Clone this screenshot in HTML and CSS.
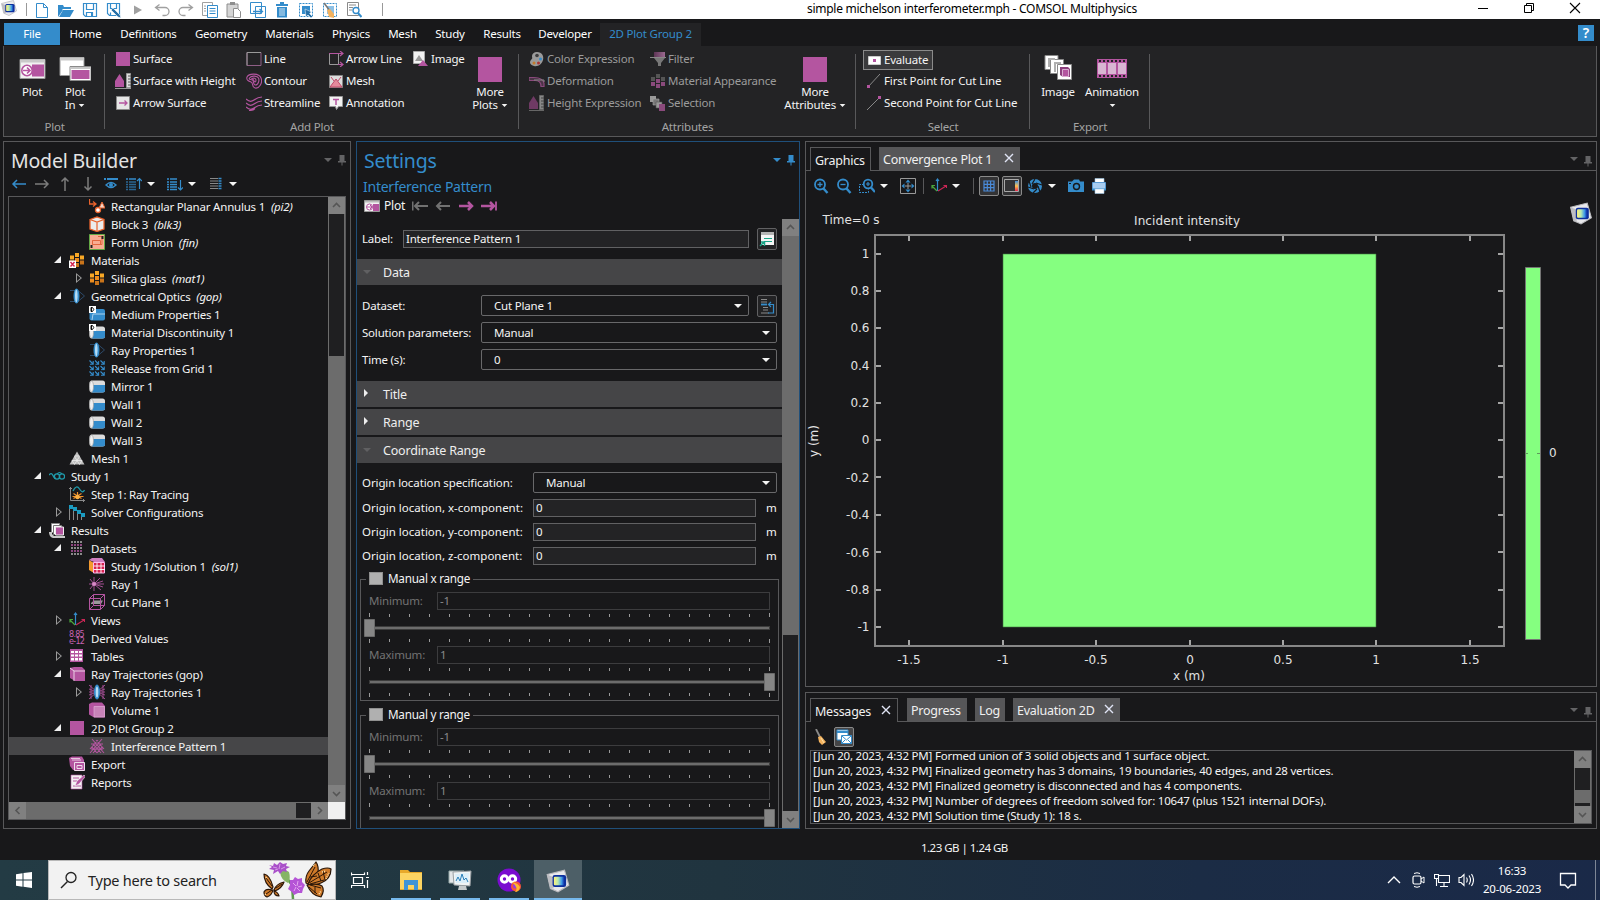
FILE: index.html
```html
<!DOCTYPE html>
<html lang="en">
<head>
<meta charset="utf-8">
<title>simple michelson interferometer.mph - COMSOL Multiphysics</title>
<link rel="stylesheet" href="styles.css">
</head>
<body>
<svg class="defs" aria-hidden="true">
<defs>
<linearGradient id="gLogo" x1="0" x2="1"><stop offset="0" stop-color="#fff27a"/><stop offset=".4" stop-color="#b8e8b0"/><stop offset=".75" stop-color="#3f9be8"/><stop offset="1" stop-color="#1030a8"/></linearGradient>
<linearGradient id="gBar" x1="0" x2="0" y1="0" y2="1"><stop offset="0" stop-color="#3a8fe0"/><stop offset=".5" stop-color="#ffc04a"/><stop offset="1" stop-color="#e02a50"/></linearGradient>
<linearGradient id="gFil" x1="0" x2="1"><stop offset="0" stop-color="#5d3455"/><stop offset="1" stop-color="#9a6a90"/></linearGradient>
</defs>
<symbol id="logo" viewBox="0 0 24 24"><path d="M2 6 18 2 22 16 12 22 5 19z" fill="#e9e9ec" stroke="#b9b9bd"/><path d="M2 6 7 8 8 19 5 19z" fill="#bdbdc2"/><rect x="7" y="6.500" width="12.500" height="11" rx="2" fill="#0d2f9d"/><rect x="8.200" y="8" width="9.500" height="8" rx="1" fill="url(#gLogo)"/></symbol>
<symbol id="new" viewBox="0 0 16 16"><path d="M2.500 1.500h7l4 4v10h-11zM9.500 1.500v4h4" fill="#fff" stroke="#348ccb"/></symbol>
<symbol id="open" viewBox="0 0 16 16"><path d="M0 15V3h5l1 2h7v3H5z" fill="#348ccb"/><path d="M5 8h11l-4 7H1z" fill="#348ccb"/><path d="M4.500 7.500h9" stroke="#fff"/></symbol>
<symbol id="save" viewBox="0 0 16 16"><path d="M1.500 1.500h13v13h-11l-2-2zM4.500 1.500v6h7v-6M4.500 14.500v-4h6v4" fill="none" stroke="#348ccb" stroke-width="1.200"/><path d="M9 11h1.500v3H9z" fill="#348ccb"/></symbol>
<symbol id="saveas" viewBox="0 0 16 16"><path d="M1.500 1.500h12v12h-10l-2-2zM4.500 1.500v5h6v-5M4.500 13.500v-3" fill="none" stroke="#348ccb" stroke-width="1.200"/><path d="M7 6l7 7 1 3-3-1-7-7z" fill="#2670a8" stroke="#fff" stroke-width=".6"/></symbol>
<symbol id="play" viewBox="0 0 16 16"><path d="M4 3.500l8 4.500-8 4.500z" fill="#a0a0a0"/></symbol>
<symbol id="undo" viewBox="0 0 16 16"><path d="M5.500 2.500l-4 3 4 3M1.500 5.500H11a3.500 3.500 0 0 1 0 8H8.500" fill="none" stroke="#a0a0a0" stroke-width="1.300"/></symbol>
<symbol id="redo" viewBox="0 0 16 16"><path d="M10.500 2.500l4 3-4 3M14.500 5.500H5a3.500 3.500 0 0 0 0 8h2.500" fill="none" stroke="#a0a0a0" stroke-width="1.300"/></symbol>
<symbol id="copy" viewBox="0 0 16 16"><path d="M.5.500h10v13H.5z" fill="#fff" stroke="#a0a0a0"/><path d="M2 4h2M2 6.500h2M2 9h2" stroke="#a0a0a0"/><path d="M5.500 3.500h10v12h-10z" fill="#fff" stroke="#348ccb"/><path d="M7.500 6.500h6M7.500 9h6M7.500 11.500h6" stroke="#348ccb"/></symbol>
<symbol id="paste" viewBox="0 0 16 16"><path d="M1 2h11v13H1z" fill="#d5d5d5" stroke="#8e8e8e"/><path d="M4 0h5v3H4z" fill="#8e8e8e"/><path d="M7.500 6.500h4l3 3v6h-7z" fill="#fff" stroke="#8e8e8e"/></symbol>
<symbol id="dup" viewBox="0 0 16 16"><path d="M.5.500h11v11H.500zM5.500 4.500h10v11h-10z" fill="#fff" stroke="#348ccb"/><path d="M3 9.500h9M9.500 7l3 2.500-3 2.500" fill="none" stroke="#348ccb" stroke-width="1.300"/></symbol>
<symbol id="trash" viewBox="0 0 16 16"><path d="M2 2h12v2H2zM6 0h4v2H6zM3 5h10v10.500H3z" fill="#348ccb"/><path d="M6 6v8M8 6v8M10 6v8" stroke="#fff" stroke-width=".8"/></symbol>
<symbol id="selbox" viewBox="0 0 16 16"><path d="M1.500 1.500h13v13h-13z" fill="none" stroke="#348ccb" stroke-dasharray="2 1"/><path d="M4 4h8v8H4z" fill="#348ccb"/><path d="M7 7l1 8 2-2 3 3 1.500-1.500-3-3 2-1.500z" fill="#2670a8" stroke="#fff" stroke-width=".5"/></symbol>
<symbol id="selclear" viewBox="0 0 16 16"><path d="M1.500 1.500h13v13h-13z" fill="none" stroke="#348ccb" stroke-dasharray="2 1"/><path d="M5 4h7v8H5z" fill="#8cc0e6"/><path d="M2 1l6 8" stroke="#777" stroke-width="1.500"/><path d="M5 8l3-1 4 5v4l-5-1z" fill="#f3b25e"/></symbol>
<symbol id="find" viewBox="0 0 16 16"><path d="M1.500.500h11v13h-11z" fill="#fff" stroke="#8a8a8a"/><path d="M3 3h7M3 5.500h4M3 8h3" stroke="#8a8a8a"/><circle cx="10" cy="8.500" r="3" fill="#fff" stroke="#348ccb" stroke-width="1.400"/><path d="M12 11l3.500 4" stroke="#348ccb" stroke-width="2"/></symbol>

<symbol id="bPlot" viewBox="0 0 32 32"><path d="M4 6.500h25v19H4z" fill="#f2f2f2" stroke="#9a9a9a"/><path d="M4 6.500h25v3H4z" fill="#c9c9c9"/><path d="M16 11.500h12v12H16z" fill="#b455a0"/><circle cx="11" cy="17.500" r="5.200" fill="#fff" stroke="#b455a0" stroke-width="1.600"/><path d="M7 17.500h7M11 14.500l3 3-3 3" fill="none" stroke="#b455a0" stroke-width="1.600"/></symbol>
<symbol id="bPlotIn" viewBox="0 0 32 32"><path d="M1 4.500h24v18H1z" fill="#fff" stroke="#9a9a9a"/><path d="M1 4.500h24v3H1z" fill="#c9c9c9"/><path d="M11 13.500h21v14H11z" fill="#fff" stroke="#8a8a8a"/><path d="M11.500 14h20v2h-20z" fill="#c9c9c9"/><path d="M12.500 17h18v9h-18z" fill="#b455a0"/></symbol>
<symbol id="bSq" viewBox="0 0 32 32"><path d="M4 4h24v25H4z" fill="#b455a0"/></symbol>
<symbol id="bImg" viewBox="0 0 32 32"><g stroke="#8a8a8a"><path d="M3 2.500h13v14H3z" fill="#fff"/><path d="M8.500 6.500h13v14h-13z" fill="#fff"/><path d="M15.500 11.500h14v15h-14z" fill="#fff"/></g><path d="M6 5h7v2H8v7H6zM12 9h7v2h-5v8h-2z" fill="#b0b0b0"/><path d="M18 14h8l2 2v8h-7l-3-2z" fill="#8d3f7e"/><path d="M20.500 16.500h6v7h-6z" fill="#b455a0" stroke="#e9c8e2" stroke-width=".8"/></symbol>
<symbol id="bAnim" viewBox="0 0 32 32"><path d="M1 6h30v19H1z" fill="#b455a0"/><path d="M2 10h8v11H2zM12 10h8v11h-8zM22 10h8v11h-8z" fill="#d9b6d3"/><path d="M3 8h27M3 23h27" stroke="#232325" stroke-width="1.800" stroke-dasharray="2 2"/></symbol>
<symbol id="sSurf" viewBox="0 0 16 16"><path d="M1 1h14v14H1z" fill="#b455a0"/></symbol>
<symbol id="sHeight" viewBox="0 0 16 16"><path d="M0 14V8l4.500-7L9 8v6z" fill="#b455a0"/><path d="M0 15.500h16" stroke="#999"/><path d="M11.500.500h4v14h-4z" fill="#ddd" stroke="#999"/><path d="M13 3h3M13 6h3M13 9h3M13 12h3" stroke="#555"/></symbol>
<symbol id="sArrSurf" viewBox="0 0 16 16"><path d="M1.500 1.500h13v13h-13z" fill="#e6e6e6" stroke="#8a8a8a"/><path d="M4 8h8M9.500 5.500L12 8l-2.500 2.500" fill="none" stroke="#b455a0" stroke-width="1.300"/></symbol>
<symbol id="sLine" viewBox="0 0 16 16"><path d="M1 1.500h14v13H1z" fill="none" stroke="#8f5f86"/><path d="M1 14.500v-13h14" fill="none" stroke="#999"/></symbol>
<symbol id="sContour" viewBox="0 0 16 16"><g fill="none" stroke="#b455a0" stroke-width="1.100"><path d="M1 4c2-4 12-4 14 1s-2 11-6 10-1-5-4-6S0 7 1 4z"/><path d="M3.500 5c2-3 8-2 9 0s0 7-3 7-1-4-3-5-4 0-3-2z"/><path d="M6 5.500c2-1 4 0 4 1.500S9.500 9 9 9 8 7 6 5.500z"/></g></symbol>
<symbol id="sStream" viewBox="0 0 16 16"><path d="M0 4q4 4 8 1t8-3M0 8q4 4 8 1t8-3M0 12q4 4 8 1t8-3M3 15.500q4 0 6-2" fill="none" stroke="#b455a0" stroke-width="1.200"/></symbol>
<symbol id="sArrLine" viewBox="0 0 16 16"><path d="M1.500 2.500h9v11h-9z" fill="none" stroke="#999"/><path d="M1 2.500h14M12 0l3 2.500L12 5M10 13.500h5M12 11l3 2.500-3 2.500" fill="none" stroke="#b455a0" stroke-width="1.200"/></symbol>
<symbol id="sMesh" viewBox="0 0 16 16"><path d="M1.500 2.500h13v12h-13z" fill="#ddd" stroke="#888"/><path d="M2 14L8 6l6 8z" fill="#e58a9c" stroke="#c04a6a"/><path d="M3 4l3 4M13 4l-3 4" stroke="#c04a6a"/></symbol>
<symbol id="sAnno" viewBox="0 0 16 16"><path d="M1.500 1.500h13v10h-4l-2 3-1-3h-6z" fill="#f2f2f2" stroke="#999"/><path d="M5 4.500h6M8 4v6" stroke="#b455a0" stroke-width="1.500"/></symbol>
<symbol id="sImage" viewBox="0 0 16 16"><path d="M.500.500h11v12h-11z" fill="#f2f2f2" stroke="#aaa"/><path d="M2 10l4-6 4 6z" fill="#999"/><path d="M5 15l5-6 5 6z" fill="#b455a0"/></symbol>
<symbol id="sPalette" viewBox="0 0 16 16"><path d="M8 1c5 0 7 4 6 8s-5 7-9 6-5-4-3-6 1-2 1-4 2-4 5-4z" fill="#9a9a9a"/><circle cx="8" cy="4.500" r="1.800" fill="#3c3c3e"/><circle cx="11.500" cy="8" r="1.500" fill="#348ccb"/><circle cx="9.500" cy="12" r="1.500" fill="#a33"/><circle cx="5" cy="12" r="1.500" fill="#c27b2b"/></symbol>
<symbol id="sDeform" viewBox="0 0 16 16"><path d="M0 4.500h5q9 0 10 6v3h-3q0-6-6-6H0z" fill="#4a3446" stroke="#8a4a7c" stroke-width="1.200"/><path d="M5 7h10v2" fill="none" stroke="#888"/></symbol>
<symbol id="sHeightD" viewBox="0 0 16 16"><path d="M0 14V8l4.500-7L9 8v6z" fill="#6f3a64"/><path d="M0 15.500h15" stroke="#666"/><path d="M10.500.500h4v14h-4z" fill="#888" stroke="#666"/><path d="M12 3h3M12 6h3M12 9h3M12 12h3" stroke="#444"/></symbol>
<symbol id="sFilter" viewBox="0 0 16 16"><path d="M4 1h11v5H4z" fill="url(#gFil)"/><path d="M0 6.500h16" stroke="#888"/><path d="M4 7h11l-4 5v3H8v-3z" fill="#777"/></symbol>
<symbol id="sMatApp" viewBox="0 0 16 16"><path d="M6 1h4v4H6zM1 4h4v4H1zM11 4h4v4h-4z" fill="#555"/><path d="M6 6h4v4H6zM1 9h4v4H1zM11 9h4v4h-4zM6 11h4v4H6z" fill="#8a4a7c"/></symbol>
<symbol id="sSel" viewBox="0 0 16 16"><path d="M0 1h6v6H0z" fill="#999"/><path d="M3 4h6v6H3z" fill="#777" stroke="#aaa" stroke-width=".6"/><path d="M6 7h6v6H6z" fill="#999" stroke="#555" stroke-width=".6"/><path d="M9 9h6v7H9z" fill="#8a4a7c"/></symbol>
<symbol id="sEval" viewBox="0 0 16 16"><path d="M2.500 4.500h12v8h-12z" fill="#fff" stroke="#ccc"/><path d="M7 7h3v3H7z" fill="#b455a0"/></symbol>
<symbol id="sFirst" viewBox="0 0 16 16"><path d="M2 14L14 1" stroke="#888"/><path d="M1 12h3v3H1z" fill="#b455a0"/></symbol>
<symbol id="sSecond" viewBox="0 0 16 16"><path d="M1 15L13 3" stroke="#888"/><path d="M12 1h3v3h-3z" fill="#b455a0"/></symbol>

<symbol id="dd" viewBox="0 0 10 6"><path d="M1 1h8L5 5z" fill="currentColor"/></symbol>
<symbol id="pin" viewBox="0 0 8 12"><path d="M1.500 1h5v6h-5zM0 7h8v1.500H0zM3.500 8h1v3.500h-1z" fill="currentColor"/></symbol>
<symbol id="aL" viewBox="0 0 16 16"><path d="M15 8H2M6 4L2 8l4 4" fill="none" stroke="currentColor" stroke-width="1.500"/></symbol>
<symbol id="aR" viewBox="0 0 16 16"><path d="M1 8h13M10 4l4 4-4 4" fill="none" stroke="currentColor" stroke-width="1.500"/></symbol>
<symbol id="aU" viewBox="0 0 16 16"><path d="M8 15V2M4.500 5.500L8 2l3.500 3.500" fill="none" stroke="currentColor" stroke-width="1.500"/></symbol>
<symbol id="aD" viewBox="0 0 16 16"><path d="M8 1v13M4.500 10.500L8 14l3.500-3.500" fill="none" stroke="currentColor" stroke-width="1.500"/></symbol>
<symbol id="eye" viewBox="0 0 16 16"><path d="M1 3h2M4 3h11" stroke="#348ccb" stroke-width="2"/><path d="M3 9q5-5 10 0q-5 5-10 0z" fill="none" stroke="#348ccb" stroke-width="1.400"/><circle cx="8" cy="9" r="2" fill="#348ccb"/></symbol>
<symbol id="expU" viewBox="0 0 16 16"><path d="M0 3h2m1 0h7" stroke="#348ccb" stroke-width="1.500"/><path d="M0 6h2m1 0h7M0 8.500h2m1 0h7M0 11h2m1 0h7M0 13.500h2m1 0h7" stroke="#2a6592" stroke-width="1.300"/><path d="M13.500 13V2.500M11 5l2.500-2.500L16 5" fill="none" stroke="#348ccb" stroke-width="1.200"/></symbol>
<symbol id="expD" viewBox="0 0 16 16"><path d="M0 3h2m1 0h7M0 6h2m1 0h7M0 8.500h2m1 0h7M0 11h2m1 0h7M0 13.500h2m1 0h7" stroke="#348ccb" stroke-width="1.400"/><path d="M13.500 4v10M11 11.500l2.500 2.500 2.500-2.500" fill="none" stroke="#348ccb" stroke-width="1.200"/></symbol>
<symbol id="cols" viewBox="0 0 16 16"><path d="M2 2.500h8M2 5h8M2 7.500h8M2 10h8M2 12.500h8" stroke="#888" stroke-width="1.200"/><path d="M10.500 2.500h3M10.500 5h3M10.500 7.500h3M10.500 10h3M10.500 12.500h3" stroke="#348ccb" stroke-width="1.500"/></symbol>

<symbol id="tAnn" viewBox="0 0 16 16"><path d="M.500 1v5h6M4 3.500L7 6 4 8.500" fill="none" stroke="#e8622c" stroke-width="1.300"/><path d="M10 10l3-6 3 6z" fill="#f6d6c8" stroke="#e8622c"/><circle cx="9" cy="12" r="2.500" fill="#fff" stroke="#e8622c" stroke-width="1.300"/></symbol>
<symbol id="tBlock" viewBox="0 0 16 16"><path d="M1 3.500L8 1l7 2.500V13l-7 2.500L1 13z" fill="#ececec" stroke="#e8622c" stroke-width="1.300"/><path d="M1 3.500L8 6l7-2.500M8 6v9.500" fill="none" stroke="#e8622c" stroke-width="1.200"/></symbol>
<symbol id="tUnion" viewBox="0 0 16 16"><path d="M.500.500h15v15H.500z" fill="#f9ac92" stroke="#63a845"/><path d="M3.500 6.500h8v4h-8zM3.500 10.500V6.500M13 2.500H9M13 2.500v8h-2" fill="none" stroke="#e2673f"/><path d="M12.500 2h2v3h-2zM1.500 11h2v3h-2z" fill="#222"/></symbol>
<symbol id="tMat" viewBox="0 0 16 16"><path d="M6 1h4v4H6zM1 3.500h4v4H1zM11 3.500h4v4h-4z" fill="#f9a825"/><path d="M6 6h4v4H6zM1 8.500h4v4H1z" fill="#ee8d1d"/><path d="M11 8.500h4v4h-4zM6 11h4v4H6z" fill="#c9741a"/></symbol>
<symbol id="tMatX" viewBox="0 0 16 16"><use href="#tMat"/><path d="M0 8.500h7V16H0z" fill="#fff"/><path d="M1.500 10l4 4.500M5.500 10l-4 4.500" stroke="#d0214e" stroke-width="1.400"/></symbol>
<symbol id="tLens" viewBox="0 0 16 16"><path d="M1 2.500h8l6.500 5.500-6.500 5.500H1" fill="none" stroke="#2d4a68"/><ellipse cx="7.500" cy="8" rx="3" ry="7.500" fill="#348ccb"/><ellipse cx="7.300" cy="8" rx="1.300" ry="6.500" fill="#b4dcf6"/></symbol>
<symbol id="tMed" viewBox="0 0 16 16"><rect x=".5" y="3" width="15.500" height="11.500" rx="2" fill="#348ccb"/><path d="M4 8h12M4 8l-1 6" stroke="#a9d1ee"/><path d="M0 0h7v7H0z" fill="#fff"/><path d="M2 1.500h1.500q2.500 2 0 4H2zM2.500 1.500v4" fill="none" stroke="#111"/></symbol>
<symbol id="tWall" viewBox="0 0 16 16"><rect x=".5" y="2.500" width="15.500" height="12" rx="2.500" fill="#dcdcdc"/><path d="M4 7h12v5.500a2 2 0 0 1-2 2H3z" fill="#348ccb"/><ellipse cx="2.500" cy="8.500" rx="2" ry="5.500" fill="#f0f0f0" stroke="#a0a0a0" stroke-width=".7"/></symbol>
<symbol id="tWallD" viewBox="0 0 16 16"><use href="#tWall"/><path d="M0 0h7v7H0z" fill="#fff"/><path d="M2 1.500h1.500q2.500 2 0 4H2zM2.500 1.500v4" fill="none" stroke="#111"/></symbol>
<symbol id="tArr" viewBox="0 0 5 5"><path d="M.5.500l3.500 3.500M4.200 1v3.200H1" fill="none" stroke="#348ccb" stroke-width="1.100"/></symbol>
<symbol id="tGrid" viewBox="0 0 16 16"><g><use href="#tArr" width="5" height="5" x="0" y="0"/><use href="#tArr" width="5" height="5" x="5.500" y="0"/><use href="#tArr" width="5" height="5" x="11" y="0"/><use href="#tArr" width="5" height="5" x="0" y="5.500"/><use href="#tArr" width="5" height="5" x="5.500" y="5.500"/><use href="#tArr" width="5" height="5" x="11" y="5.500"/><use href="#tArr" width="5" height="5" x="0" y="11"/><use href="#tArr" width="5" height="5" x="5.500" y="11"/><use href="#tArr" width="5" height="5" x="11" y="11"/></g></symbol>
<symbol id="tMesh" viewBox="0 0 16 16"><path d="M8 1.500l7.500 13H.500z" fill="#bdbdbd"/><path d="M5.500 6h5M3 10.500h10M8 10.500l-2.500-4M8 10.500l2.500-4M5.500 14.500L3 10.500M5.500 14.500L8 10.500l2.500 4 2.500-4" fill="none" stroke="#ececec" stroke-width=".8"/></symbol>
<symbol id="tStudy" viewBox="0 0 16 16"><path d="M0 7q2.500-3 4 .5t3 2.500" fill="none" stroke="#1f9bab" stroke-width="1.400"/><circle cx="8" cy="8.500" r="2.600" fill="none" stroke="#1f9bab" stroke-width="1.300"/><circle cx="13" cy="8.500" r="2.600" fill="none" stroke="#1f9bab" stroke-width="1.300"/><path d="M8 6q2.500-3 5 0" fill="none" stroke="#1f9bab" stroke-width="1.200"/></symbol>
<symbol id="tStep" viewBox="0 0 16 16"><path d="M1.500 1v13.500H16M0 2.500h3M14.500 13v3" fill="none" stroke="#8a8a8a"/><path d="M4 5q3.500-7 6.500-2t5 1" fill="none" stroke="#1f9bab" stroke-width="1.300"/><path d="M4.500 7.500l8 5M12.500 7.500l-8 5M8.500 6v6M3.500 10.500h11" stroke="#f0912a" stroke-width="1.200"/><circle cx="8.500" cy="11" r="2.200" fill="#f9b045"/></symbol>
<symbol id="tSolver" viewBox="0 0 16 16"><path d="M.500 4v12M4.500 4v12M8.500 6v10M12.500 9v7" stroke="#8a8a8a"/><path d="M0 1h4v4H0zM4 3h4v4H4zM8 6h4v4H8zM12 9h4v4h-4z" fill="#1b9bc0"/></symbol>
<symbol id="tRes" viewBox="0 0 16 16"><path d="M2.500 1.500h8v9h-8z" fill="#fff" stroke="#888"/><path d="M4.500 3.500h8v9h-8z" fill="#fff" stroke="#777"/><path d="M6.500 5h8v8h-8z" fill="#b455a0" stroke="#eee"/><path d="M0 10h3v2l2 2h11v2H4q-4-1-4-6z" fill="#c9c9c9"/></symbol>
<symbol id="tData" viewBox="0 0 16 16"><path d="M2 2h12M2 8h12M2 14h12" stroke="#b0b0b0" stroke-width="1.500" stroke-dasharray="2 1"/><path d="M2 5h12M2 11h12" stroke="#b455a0" stroke-width="1.500" stroke-dasharray="2 1"/></symbol>
<symbol id="tSol" viewBox="0 0 16 16"><path d="M0 2l5 3v10l-5-3z" fill="#f39a2e"/><path d="M0 2l3-2h10l3 4H5z" fill="#cf7fc0"/><path d="M4.500 4.500h11v10.500h-11z" fill="#d8214f" stroke="#ffbbee"/><path d="M8 5v10M12 5v10M5 8h11M5 11.500h11" stroke="#fff" stroke-width=".9"/></symbol>
<symbol id="tRay" viewBox="0 0 16 16"><path d="M0 8h15M5 8L5 1M5 8l0 7M5 8L1 3M5 8l-4 5M5 8l6-6M5 8l7 6M5 8l9-3M5 8l9 3" stroke="#a04d90"/><circle cx="5" cy="8" r="2" fill="#d98bc8"/></symbol>
<symbol id="tCut" viewBox="0 0 16 16"><path d="M2 9l3-2.500h9L12 10H2z" fill="#9a9a9a"/><path d="M.500 4.500h11v11H.500zM4.500.500h11v11h-11zM.500 4.500l4-4M11.500 4.500l4-4M11.500 15.500l4-4M.500 15.500l4-4" fill="none" stroke="#b455a0"/></symbol>
<symbol id="tAxes" viewBox="0 0 16 16"><path d="M6.500 13V1M5 3l1.500-2L8 3" fill="none" stroke="#348ccb" stroke-width="1.200"/><path d="M6 13L1 8M1 10.500V7.500h3" fill="none" stroke="#4aa63c" stroke-width="1.200"/><path d="M7 13l8-5M12.500 7.500h3V10" fill="none" stroke="#c92655" stroke-width="1.200"/></symbol>
<symbol id="tTab" viewBox="0 0 16 16"><path d="M1 1h13v13H1z" fill="#b455a0"/><path d="M2 3h3v2H2zM6 3h3v2H6zM10 3h3v2h-3zM2 6.500h3v2H2zM6 6.500h3v2H6zM10 6.500h3v2h-3zM2 10h3v2.500H2zM6 10h3v2.500H6zM10 10h3v2.500h-3z" fill="#fff"/></symbol>
<symbol id="tCube" viewBox="0 0 16 16"><path d="M1 2l4-1h8l3 3v11H6l-5-3z" fill="#b455a0"/><path d="M1 2l4 3h11M5 5v10" fill="none" stroke="#ead0e4"/></symbol>
<symbol id="tTraj" viewBox="0 0 16 16"><path d="M0 1l16 14M0 15L16 1M0 5l16 6M0 11l16-6M0 8h16M2 1v14M14 1v14" stroke="#a04d90"/><ellipse cx="8" cy="8" rx="3" ry="7.500" fill="#348ccb"/><ellipse cx="8" cy="8" rx="1.300" ry="5.500" fill="#b5dcf5"/></symbol>
<symbol id="tVol" viewBox="0 0 16 16"><path d="M0 2l3-1.500h10L16 4v11.500H5l-5-3z" fill="#b455a0"/><path d="M5 4.500h10.500v10.500H5z" fill="#c883b8" stroke="#dfaed6" stroke-width=".7"/></symbol>
<symbol id="tInt" viewBox="0 0 16 16"><path d="M1 15L13 1M15 15L3 1M1 11L9 2M15 11L7 2M4 15l8-9M12 15L4 6M8 15l5-6M8 15L3 9M2 6h12M2 11h12" stroke="#b455a0" stroke-width="1.100"/></symbol>
<symbol id="tExp" viewBox="0 0 16 16"><path d="M0 2l3-1.500h10l2 3.500v10H4L1 10z" fill="#b455a0"/><path d="M2 2.500l9 0M3 4l9 0" stroke="#e7c6e0"/><path d="M5.500 6.500h10v8h-10z" fill="#b455a0" stroke="#f0dcec"/><path d="M8 9.500h5v3H8z" fill="none" stroke="#f0dcec"/></symbol>
<symbol id="tRep" viewBox="0 0 16 16"><path d="M2 1h11v14H2z" fill="#f2f2f2" stroke="#b455a0" stroke-width=".6"/><path d="M4 4h6M4 7h4M4 12h8" stroke="#b455a0" stroke-width="1.200"/><path d="M6 12l2-5 7-6 1.500 1.500L10 10z" fill="#b455a0" stroke="#fff" stroke-width=".5"/></symbol>

<symbol id="tPlot" viewBox="0 0 16 16"><path d="M.500 2.500h15v11H.500z" fill="#f2f2f2" stroke="#9a9a9a"/><path d="M1 3h14v1.500H1z" fill="#bbb"/><path d="M9 6h6v7H9z" fill="#b455a0"/><circle cx="5.500" cy="9" r="3" fill="#fff" stroke="#b455a0"/><path d="M3 9h5M6 7l2 2-2 2" fill="none" stroke="#b455a0"/></symbol>
<symbol id="mF" viewBox="0 0 16 16"><path d="M.750 3.500v9" stroke="#717171" stroke-width="1.500"/><path d="M16 8H4M7 4L3 8l4 4" fill="none" stroke="#717171" stroke-width="2"/></symbol>
<symbol id="mL" viewBox="0 0 16 16"><path d="M15 8H3M6 4L2 8l4 4" fill="none" stroke="#717171" stroke-width="2"/></symbol>
<symbol id="mR" viewBox="0 0 16 16"><path d="M1 8h12M10 4l4 4-4 4" fill="none" stroke="#b455a0" stroke-width="2.500"/></symbol>
<symbol id="mE" viewBox="0 0 16 16"><path d="M0 8h12M9 4l4 4-4 4" fill="none" stroke="#b455a0" stroke-width="2.500"/><path d="M15 3.500v9" stroke="#b455a0" stroke-width="1.800"/></symbol>
<symbol id="rename" viewBox="0 0 16 16"><path d="M2 1h13v13H2z" fill="#f5f5f5"/><path d="M2 1h13v3H2z" fill="#b5b5b5"/><path d="M5 7.500h8M5 10.500h8" stroke="#1ba588" stroke-width="1.200"/><path d="M1 15l4-4M2 11h3.500v4" fill="none" stroke="#1ba588" stroke-width="1.500"/></symbol>
<symbol id="gotosrc" viewBox="0 0 16 16"><path d="M2 1.500h6M2 4h6M4 9.500h5M4 12h5M2 15h8" stroke="#8a8a8a" stroke-width="1.200"/><path d="M2 6.500h6" stroke="#348ccb" stroke-width="1.800"/><path d="M9 15h5.500V6.500H10M12 4L9.500 6.500 12 9" fill="none" stroke="#348ccb" stroke-width="1.200"/></symbol>

<symbol id="zIn" viewBox="0 0 16 16"><circle cx="7" cy="6.500" r="5" fill="none" stroke="#348ccb" stroke-width="1.800"/><path d="M10.500 10.500L14.500 15" stroke="#348ccb" stroke-width="2.400"/><path d="M4.500 6.500h5M7 4v5" stroke="#348ccb" stroke-width="1.300"/></symbol>
<symbol id="zOut" viewBox="0 0 16 16"><circle cx="7" cy="6.500" r="5" fill="none" stroke="#348ccb" stroke-width="1.800"/><path d="M10.500 10.500L14.500 15" stroke="#348ccb" stroke-width="2.400"/><path d="M4.500 6.500h5" stroke="#348ccb" stroke-width="1.300"/></symbol>
<symbol id="zBox" viewBox="0 0 16 16"><path d="M5 6.500H.500v8h9v-3" fill="none" stroke="#348ccb" stroke-dasharray="2 1"/><circle cx="9" cy="6" r="4.300" fill="#18181a" stroke="#348ccb" stroke-width="1.800"/><path d="M12 9.500l4 4.500" stroke="#348ccb" stroke-width="2.400"/><path d="M7 6h4M9 4v4" stroke="#348ccb" stroke-width="1.200"/></symbol>
<symbol id="zExt" viewBox="0 0 16 16"><path d="M.500.500h15v15H.500z" fill="none" stroke="#999"/><path d="M8 5v6M5 8h6" stroke="#999"/><path d="M8 1.500l2.500 3h-5zM8 14.500l-2.500-3h5zM1.500 8l3-2.500v5zM14.500 8l-3 2.500v-5z" fill="#348ccb"/></symbol>
<symbol id="gGrid" viewBox="0 0 16 16"><path d="M3 3h10v10H3zM3 6.300h10M3 9.600h10M6.300 3v10M9.600 3v10" fill="none" stroke="#4a8ad8" stroke-width="1.200"/></symbol>
<symbol id="gLeg" viewBox="0 0 16 16"><path d="M.500 1.500h14v12h-14z" fill="none" stroke="#a8a8a8"/><path d="M11 3h3v10h-3z" fill="url(#gBar)"/></symbol>
<symbol id="gScene" viewBox="0 0 16 16"><circle cx="8" cy="8" r="5" fill="none" stroke="#348ccb" stroke-width="4"/><path d="M8 1l-3 5M15 7l-6-2M13 14l-2-6M6 15l4-4M1 9l6 2M2 3l2 6" stroke="#18181a" stroke-width="1.200"/></symbol>
<symbol id="cam" viewBox="0 0 16 16"><path d="M0 3.500h4l2-2h5l1 2h4V14H0z" fill="#348ccb"/><circle cx="8.500" cy="8.500" r="3" fill="none" stroke="#18181a" stroke-width="1.400"/><path d="M1 5h2v1H1z" fill="#18181a"/></symbol>
<symbol id="prn" viewBox="0 0 16 16"><path d="M4 .500h9v5H4z" fill="#fff" stroke="#9cc4e4" stroke-width=".6"/><path d="M1.500 4.500h13v7h-13z" fill="#a9cdf0" stroke="#5a9bd4"/><path d="M1 11.500h14" stroke="#348ccb" stroke-width="2"/><path d="M4 11h9v4.500H4z" fill="#fff" stroke="#9cc4e4" stroke-width=".6"/></symbol>
<symbol id="broom" viewBox="0 0 16 16"><path d="M3 0l4 8" stroke="#8a8a8a" stroke-width="1.800"/><path d="M5 8l3-1 5 6-4 3-3-3z" fill="#f3b25e"/><path d="M8 9l3 5" stroke="#fde0a8"/></symbol>
<symbol id="msgI" viewBox="0 0 16 16"><path d="M1 1h11v10H1z" fill="#fff" stroke="#348ccb"/><path d="M1 2h11v2H1z" fill="#348ccb"/><path d="M5.500 6.500h10v8h-10z" fill="#fff" stroke="#348ccb"/><path d="M6 7l4.500 4L15 7M6 14l3-3M15 14l-3-3" fill="none" stroke="#348ccb"/></symbol>
<symbol id="sbU" viewBox="0 0 17 17"><path d="M5 10l3.500-3.500L12 10" fill="none" stroke="#555" stroke-width="1.600"/></symbol>
<symbol id="sbD" viewBox="0 0 17 17"><path d="M5 7l3.500 3.500L12 7" fill="none" stroke="#555" stroke-width="1.600"/></symbol>
<symbol id="sbL" viewBox="0 0 17 17"><path d="M10.500 5L7 8.500l3.500 3.500" fill="none" stroke="#555" stroke-width="1.600"/></symbol>
<symbol id="sbR" viewBox="0 0 17 17"><path d="M7 5l3.500 3.500L7 12" fill="none" stroke="#555" stroke-width="1.600"/></symbol>
<symbol id="slider" viewBox="0 0 417 36"><path d="M8 5.500h401" stroke="#9a9a9a" stroke-width="3" stroke-dasharray="1 19"/><path d="M8.500 3v4M408.500 3v4M8.500 29v4M408.500 29v4" stroke="#9a9a9a"/><path d="M8 30.500h401" stroke="#9a9a9a" stroke-width="3" stroke-dasharray="1 19"/><path d="M8 16h401v4H8z" fill="#3c3c3c"/><path d="M9 17h399v2H9z" fill="#6c6c6c"/></symbol>
</svg>

<header class="titlebar">
<svg class="app"><use href="#logo"/></svg><i class="vsep"></i>
<nav class="quick"><svg><use href="#new"/></svg><svg><use href="#open"/></svg><svg><use href="#save"/></svg><svg><use href="#saveas"/></svg><svg><use href="#play"/></svg><svg><use href="#undo"/></svg><svg><use href="#redo"/></svg><svg><use href="#copy"/></svg><svg><use href="#paste"/></svg><svg><use href="#dup"/></svg><svg><use href="#trash"/></svg><svg><use href="#selbox"/></svg><svg><use href="#selclear"/></svg><svg><use href="#find"/></svg></nav>
<i class="vsep end"></i>
<span class="wtitle">simple michelson interferometer.mph - COMSOL Multiphysics</span>
<span class="wbtns"><svg viewBox="0 0 12 12"><path d="M1 6.500h10" stroke="#000"/></svg><svg viewBox="0 0 12 12"><path d="M1.500 3.500h7v7h-7zM3.500 3.500v-2h7v7h-2" fill="none" stroke="#000"/></svg><svg viewBox="0 0 12 12"><path d="M1 1l10 10M11 1L1 11" stroke="#000" stroke-width="1.100"/></svg></span>
</header>

<nav class="tabs">
<span class="file">File</span><span class="t1">Home</span><span class="t2">Definitions</span><span class="t3">Geometry</span><span class="t4">Materials</span><span class="t5">Physics</span><span class="t6">Mesh</span><span class="t7">Study</span><span class="t8">Results</span><span class="t9">Developer</span><span class="on">2D Plot Group 2</span><b class="help">?</b>
</nav>

<section class="ribbon">
<div class="grp g1"><div class="body"><div class="big w46"><svg><use href="#bPlot"/></svg><span>Plot</span></div><div class="big w40"><svg><use href="#bPlotIn"/></svg><span>Plot<br>In <svg class="dd"><use href="#dd"/></svg></span></div></div><h6>Plot</h6></div>
<div class="grp g2"><div class="body">
<div class="col c131"><p><svg><use href="#sSurf"/></svg>Surface</p><p><svg><use href="#sHeight"/></svg>Surface with Height</p><p><svg><use href="#sArrSurf"/></svg>Arrow Surface</p></div>
<div class="col c82"><p><svg><use href="#sLine"/></svg>Line</p><p><svg><use href="#sContour"/></svg>Contour</p><p><svg><use href="#sStream"/></svg>Streamline</p></div>
<div class="col c85"><p><svg><use href="#sArrLine"/></svg>Arrow Line</p><p><svg><use href="#sMesh"/></svg>Mesh</p><p><svg><use href="#sAnno"/></svg>Annotation</p></div>
<div class="col c52"><p><svg><use href="#sImage"/></svg>Image</p></div>
<div class="big w50"><svg><use href="#bSq"/></svg><span>More<br>Plots <svg class="dd"><use href="#dd"/></svg></span></div>
</div><h6>Add Plot</h6></div>
<div class="grp g3"><div class="body dis">
<div class="col c121"><p><svg><use href="#sPalette"/></svg>Color Expression</p><p><svg><use href="#sDeform"/></svg>Deformation</p><p><svg><use href="#sHeightD"/></svg>Height Expression</p></div>
<div class="col c130"><p><svg><use href="#sFilter"/></svg>Filter</p><p><svg><use href="#sMatApp"/></svg>Material Appearance</p><p><svg><use href="#sSel"/></svg>Selection</p></div>
<div class="big w70"><svg><use href="#bSq"/></svg><span>More<br>Attributes <svg class="dd"><use href="#dd"/></svg></span></div>
</div><h6>Attributes</h6></div>
<div class="grp g4"><div class="body"><div class="col"><p class="evalb"><svg><use href="#sEval"/></svg>Evaluate</p><p><svg><use href="#sFirst"/></svg>First Point for Cut Line</p><p><svg><use href="#sSecond"/></svg>Second Point for Cut Line</p></div></div><h6>Select</h6></div>
<div class="grp g5"><div class="body"><div class="big w54"><svg><use href="#bImg"/></svg><span>Image</span></div><div class="big w54"><svg><use href="#bAnim"/></svg><span>Animation<br><svg class="dd"><use href="#dd"/></svg></span></div></div><h6>Export</h6></div>
</section>

<main>
<section class="panel builder">
<div class="phead"><h2>Model Builder</h2><svg class="dd"><use href="#dd"/></svg><svg class="pin"><use href="#pin"/></svg></div>
<div class="mtools"><svg class="blue"><use href="#aL"/></svg><svg class="gray"><use href="#aR"/></svg><svg class="gray"><use href="#aU"/></svg><svg class="gray"><use href="#aD"/></svg><svg><use href="#eye"/></svg><svg><use href="#expU"/></svg><svg class="dd"><use href="#dd"/></svg><svg><use href="#expD"/></svg><svg class="dd"><use href="#dd"/></svg><svg><use href="#cols"/></svg><svg class="dd"><use href="#dd"/></svg></div>
<div class="treebox">
<ul class="tree">
<li class="l3"><i></i><svg><use href="#tAnn"/></svg>Rectangular Planar Annulus 1 <em>(pi2)</em></li>
<li class="l3"><i></i><svg><use href="#tBlock"/></svg>Block 3 <em>(blk3)</em></li>
<li class="l3"><i></i><svg><use href="#tUnion"/></svg>Form Union <em>(fin)</em></li>
<li class="l2"><i class="o"></i><svg><use href="#tMatX"/></svg>Materials</li>
<li class="l3"><i class="c"></i><svg><use href="#tMat"/></svg>Silica glass <em>(mat1)</em></li>
<li class="l2"><i class="o"></i><svg><use href="#tLens"/></svg>Geometrical Optics <em>(gop)</em></li>
<li class="l3"><i></i><svg><use href="#tMed"/></svg>Medium Properties 1</li>
<li class="l3"><i></i><svg><use href="#tWallD"/></svg>Material Discontinuity 1</li>
<li class="l3"><i></i><svg><use href="#tLens"/></svg>Ray Properties 1</li>
<li class="l3"><i></i><svg><use href="#tGrid"/></svg>Release from Grid 1</li>
<li class="l3"><i></i><svg><use href="#tWall"/></svg>Mirror 1</li>
<li class="l3"><i></i><svg><use href="#tWall"/></svg>Wall 1</li>
<li class="l3"><i></i><svg><use href="#tWall"/></svg>Wall 2</li>
<li class="l3"><i></i><svg><use href="#tWall"/></svg>Wall 3</li>
<li class="l2"><i></i><svg><use href="#tMesh"/></svg>Mesh 1</li>
<li class="l1"><i class="o"></i><svg><use href="#tStudy"/></svg>Study 1</li>
<li class="l2"><i></i><svg><use href="#tStep"/></svg>Step 1: Ray Tracing</li>
<li class="l2"><i class="c"></i><svg><use href="#tSolver"/></svg>Solver Configurations</li>
<li class="l1"><i class="o"></i><svg><use href="#tRes"/></svg>Results</li>
<li class="l2"><i class="o"></i><svg><use href="#tData"/></svg>Datasets</li>
<li class="l3"><i></i><svg><use href="#tSol"/></svg>Study 1/Solution 1 <em>(sol1)</em></li>
<li class="l3"><i></i><svg><use href="#tRay"/></svg>Ray 1</li>
<li class="l3"><i></i><svg><use href="#tCut"/></svg>Cut Plane 1</li>
<li class="l2"><i class="c"></i><svg><use href="#tAxes"/></svg>Views</li>
<li class="l2"><i></i><b class="num">8.85<br>e-12</b>Derived Values</li>
<li class="l2"><i class="c"></i><svg><use href="#tTab"/></svg>Tables</li>
<li class="l2"><i class="o"></i><svg><use href="#tCube"/></svg>Ray Trajectories (gop)</li>
<li class="l3"><i class="c"></i><svg><use href="#tTraj"/></svg>Ray Trajectories 1</li>
<li class="l3"><i></i><svg><use href="#tVol"/></svg>Volume 1</li>
<li class="l2"><i class="o"></i><svg><use href="#sSurf"/></svg>2D Plot Group 2</li>
<li class="l3 sel"><i></i><svg><use href="#tInt"/></svg>Interference Pattern 1</li>
<li class="l2"><i></i><svg><use href="#tExp"/></svg>Export</li>
<li class="l2"><i></i><svg><use href="#tRep"/></svg>Reports</li>
</ul>
<div class="vsb"><svg><use href="#sbU"/></svg><i class="th h142"></i><i class="grow"></i><svg><use href="#sbD"/></svg></div>
<div class="hsb"><svg><use href="#sbL"/></svg><i class="grow"></i><i class="hth"></i><svg><use href="#sbR"/></svg></div><i class="corner"></i>
</div>
</section>

<section class="panel settings">
<div class="phead"><h2>Settings</h2><svg class="dd"><use href="#dd"/></svg><svg class="pin"><use href="#pin"/></svg></div>
<h3>Interference Pattern</h3>
<div class="stools"><svg><use href="#tPlot"/></svg><span>Plot</span><svg><use href="#mF"/></svg><svg><use href="#mL"/></svg><svg><use href="#mR"/></svg><svg><use href="#mE"/></svg></div>
<div class="sscroll"><div class="scontent">
<div class="frow lab"><label>Label:</label><span class="inp">Interference Pattern 1</span><span class="ibtn"><svg><use href="#rename"/></svg></span></div>
<div class="sec"><svg class="dim"><use href="#dd"/></svg>Data</div>
<div class="data">
<div class="frow"><label>Dataset:</label><span class="cmb short">Cut Plane 1<svg class="dd"><use href="#dd"/></svg></span><span class="ibtn"><svg><use href="#gotosrc"/></svg></span></div>
<div class="frow"><label>Solution parameters:</label><span class="cmb">Manual<svg class="dd"><use href="#dd"/></svg></span></div>
<div class="frow"><label>Time (s):</label><span class="cmb">0<svg class="dd"><use href="#dd"/></svg></span></div>
</div>
<div class="sec gap"><svg class="rt"><use href="#dd"/></svg>Title</div>
<div class="sec gap"><svg class="rt"><use href="#dd"/></svg>Range</div>
<div class="sec"><svg class="dim"><use href="#dd"/></svg>Coordinate Range</div>
<div class="coord">
<div class="frow"><label>Origin location specification:</label><span class="cmb">Manual<svg class="dd"><use href="#dd"/></svg></span></div>
<div class="frow r24"><label>Origin location, x-component:</label><span class="inp">0</span><span class="unit">m</span></div>
<div class="frow r24"><label>Origin location, y-component:</label><span class="inp">0</span><span class="unit">m</span></div>
<div class="frow r24"><label>Origin location, z-component:</label><span class="inp">0</span><span class="unit">m</span></div>
</div>
<div class="fs first"><div class="lg"><i></i>Manual x range</div>
<div class="mm"><label>Minimum:</label><span class="inp">-1</span></div><svg class="sl"><use href="#slider"/><path d="M3.500 9.500h10v17h-10z" class="knob"/></svg>
<div class="mm"><label>Maximum:</label><span class="inp">1</span></div><svg class="sl"><use href="#slider"/><path d="M403.500 9.500h10v17h-10z" class="knob"/></svg></div>
<div class="fs"><div class="lg"><i></i>Manual y range</div>
<div class="mm"><label>Minimum:</label><span class="inp">-1</span></div><svg class="sl"><use href="#slider"/><path d="M3.500 9.500h10v17h-10z" class="knob"/></svg>
<div class="mm"><label>Maximum:</label><span class="inp">1</span></div><svg class="sl"><use href="#slider"/><path d="M403.500 9.500h10v17h-10z" class="knob"/></svg></div>
</div>
<div class="vsb"><svg><use href="#sbU"/></svg><i class="grow"></i><i class="th h176"></i><svg><use href="#sbD"/></svg></div>
</div>
</section>

<div class="right">
<section class="panel graphics">
<div class="ptabs"><span class="act w62">Graphics</span><span class="tab w141">Convergence Plot 1<svg class="x" viewBox="0 0 10 10"><path d="M1 1l8 8M9 1L1 9"/></svg></span><svg class="dd"><use href="#dd"/></svg><svg class="pin"><use href="#pin"/></svg></div>
<div class="gtools"><svg><use href="#zIn"/></svg><svg><use href="#zOut"/></svg><svg><use href="#zBox"/></svg><svg class="dd"><use href="#dd"/></svg><svg><use href="#zExt"/></svg><i></i><svg><use href="#tAxes"/></svg><svg class="dd"><use href="#dd"/></svg><i class="m"></i><b><svg><use href="#gGrid"/></svg></b><b><svg><use href="#gLeg"/></svg></b><svg><use href="#gScene"/></svg><svg class="dd"><use href="#dd"/></svg><svg class="cam"><use href="#cam"/></svg><svg><use href="#prn"/></svg></div>
<svg class="plot" viewBox="806 201 790 485">
<path d="M1003 254h373v373h-373z" fill="#85ff80" stroke="#3f7a3d" stroke-width=".6"/>
<path d="M875 235h629v411H875z" fill="none" stroke="#878787" stroke-width="2"/>
<path d="M909 236v5M1003 236v5M1096 236v5M1190 236v5M1283 236v5M1376 236v5M1470 236v5M909 645v-5M1003 645v-5M1096 645v-5M1190 645v-5M1283 645v-5M1376 645v-5M1470 645v-5" stroke="#a5a5a5" stroke-width="2"/>
<path d="M876 254h5M876 291h5M876 328h5M876 366h5M876 403h5M876 440h5M876 477h5M876 515h5M876 552h5M876 590h5M876 627h5M1503 254h-5M1503 291h-5M1503 328h-5M1503 366h-5M1503 403h-5M1503 440h-5M1503 477h-5M1503 515h-5M1503 552h-5M1503 590h-5M1503 627h-5" stroke="#a5a5a5" stroke-width="2"/>
<path d="M1525.500 267.500h15v372h-15z" fill="#85ff80" stroke="#757575"/>
<path d="M1525 453.500h3M1537 453.500h3" stroke="#5f9a5c"/>
<g class="ax"><text x="822.500" y="224">Time=0 s</text><text x="1187" y="225" class="mid" textLength="106">Incident intensity</text>
<g class="end"><text x="869.500" y="258">1</text><text x="869.500" y="295">0.8</text><text x="869.500" y="332">0.6</text><text x="869.500" y="370">0.4</text><text x="869.500" y="407">0.2</text><text x="869.500" y="444">0</text><text x="869.500" y="482">-0.2</text><text x="869.500" y="519">-0.4</text><text x="869.500" y="557">-0.6</text><text x="869.500" y="594">-0.8</text><text x="869.500" y="631">-1</text></g>
<g class="mid"><text x="909" y="664">-1.5</text><text x="1003" y="664">-1</text><text x="1096" y="664">-0.5</text><text x="1190" y="664">0</text><text x="1283" y="664">0.5</text><text x="1376" y="664">1</text><text x="1470" y="664">1.5</text><text x="1189" y="680">x (m)</text><text transform="translate(818 441) rotate(-90)">y (m)</text></g><text x="1549" y="457">0</text></g>
<use href="#logo" x="1568" y="201" width="26" height="25"/>
</svg>
</section>
<section class="panel messages">
<div class="ptabs"><span class="act w89">Messages<svg class="x" viewBox="0 0 10 10"><path d="M1 1l8 8M9 1L1 9"/></svg></span><span class="tab w60">Progress</span><span class="tab w30">Log</span><span class="tab w107">Evaluation 2D<svg class="x" viewBox="0 0 10 10"><path d="M1 1l8 8M9 1L1 9"/></svg></span><svg class="dd"><use href="#dd"/></svg><svg class="pin"><use href="#pin"/></svg></div>
<div class="mbar"><svg><use href="#broom"/></svg><b><svg><use href="#msgI"/></svg></b></div>
<div class="log"><div class="lines"><p>[Jun 20, 2023, 4:32 PM] Formed union of 3 solid objects and 1 surface object.</p><p>[Jun 20, 2023, 4:32 PM] Finalized geometry has 3 domains, 19 boundaries, 40 edges, and 28 vertices.</p><p>[Jun 20, 2023, 4:32 PM] Finalized geometry is disconnected and has 4 components.</p><p>[Jun 20, 2023, 4:32 PM] Number of degrees of freedom solved for: 10647 (plus 1521 internal DOFs).</p><p>[Jun 20, 2023, 4:32 PM] Solution time (Study 1): 18 s.</p></div>
<div class="vsb"><svg><use href="#sbU"/></svg><i class="th h22"></i><i class="grow"></i><i class="th h3"></i><svg><use href="#sbD"/></svg></div></div>
</section>
</div>
</main>

<div class="status">1.23 GB | 1.24 GB</div>

<footer class="taskbar">
<span class="start"><svg viewBox="0 0 16 16"><path d="M0 2.200l6.500-.900v6.200H0zM7.500 1.100L16 0v7.500H7.500zM0 8.500h6.500v6.200L0 13.800zM7.500 8.500H16V16l-8.500-1.200z" fill="#fff"/></svg></span>
<span class="search"><svg class="mag" viewBox="0 0 18 18"><circle cx="11" cy="6.500" r="5" fill="none" stroke="#222" stroke-width="1.300"/><path d="M7.500 10.500L1 17" stroke="#222" stroke-width="1.400"/></svg><span>Type here to search</span>
<svg class="bfly" viewBox="0 0 72 38"><path d="M32 38L31 24 22 12M31 26l5-5" fill="none" stroke="#5f9a50" stroke-width="2.500"/><path d="M19 11q6-3 9 0 2 7-1 11-7-3-8-11z" fill="#86b465"/><path d="M8 4l4 1 1-3 3 2 3-3 3 2 4-1-1 3 4 1-4 2 1 3-4-1-3 3-2-3-5 3 1-4-5-1 3-2z" fill="#a94fc9"/><path d="M12 6l4 1M19 3l-1 5M24 6l-4 2M14 9l3-1" stroke="#d79ae6"/><path d="M29 19l3 0 2-3 3 2 4-1 0 4 3 3-2 4-1 4-4 0-4 2-2-3-4-3 2-4z" fill="#b554d6"/><path d="M32 22l3 3M37 20l-1 5M41 25l-4 1M33 30l2-4M39 30l-3-3" stroke="#e5a8f0"/><g fill="#cf7a2a" stroke="#2a1608" stroke-width="1.200" stroke-linejoin="round"><path d="M45 22q-1-7 3-12t7-9q3 4 2 12-3 7-10 10z"/><path d="M47 23q4-10 14-15 6-2 9 0 0 10-10 14-7 3-12 2z"/><path d="M46 24q11-2 15 1 3 4-1 11-9-1-14-12z"/><path d="M11 28q-8-6-8-15 6 1 9 13z"/><path d="M13 29q2-6 10-8-2 6-9 9z"/><path d="M11 29q-6-2-8 2 0 4 3 5 5-2 6-7zM13 30q4 1 5 5-5 0-5-5z"/></g><g stroke="#2a1608" fill="none"><path d="M46 21L54 6M48 22l18-11M49 23l14-4M49 24l11 3M48 26l8 7M49 16l7-1M54 26l0 6M57 12l3 8M62 10l2 9M5 17l6 8M5 33l6-4M15 27l6-4"/></g><path d="M52 5l2-2M65 18l3-6M58 33l2-3M61 11l4-1M5 16l1 2M4 33l1 1" stroke="#ffe3b0" stroke-width="1.400" stroke-dasharray="1 1"/></svg></span>
<span class="tv"><svg viewBox="0 0 18 18"><path d="M2.500 6.500h9v6h-9zM.500 4.500V1.500M.500 1.500v2h13v-2M.500 17v-2.500h13V17M16.500 1v3M16.500 9v8M15 6.500h3" fill="none" stroke="#fff" stroke-width="1.200"/></svg></span>
<span class="task"><svg viewBox="0 0 24 24"><path d="M1 2h8l2 2h12v18H1z" fill="#e8a92a"/><path d="M1 5h22v16H1z" fill="#fcd462"/><path d="M5 12h14v10h-4v-5H9v5H5z" fill="#3f94d6"/></svg><i></i></span>
<span class="task"><svg viewBox="0 0 24 24"><path d="M1 3h15v12H1z" fill="#e3e6e8" stroke="#99aaaa"/><path d="M5 4l18-1-1 15-16-1z" fill="#f1f4f5" stroke="#9aa0a4"/><path d="M7 6l14-1-1 10-12 0z" fill="#dceffa"/><path d="M8 13l2-4 2 4 2-7 2 6 2-2 2 4" fill="none" stroke="#2b7fb8"/><path d="M11 18h7l1 4h-9z" fill="#c5cacc"/></svg><i></i></span>
<span class="task"><svg viewBox="0 0 24 24"><circle cx="12" cy="12" r="11.500" fill="#7a0bd0"/><g fill="none" stroke="#fff" stroke-width="3"><circle cx="7.500" cy="11" r="3.200"/><circle cx="15.500" cy="11" r="3.200"/></g><circle cx="19" cy="18.500" r="5" fill="#f6543a"/><circle cx="18.500" cy="18" r="2.500" fill="#9a3ce0"/><path d="M15 14q6 1 8 5-1 5-5 5 4-4-3-10z" fill="#ffb52e"/></svg><i></i></span>
<span class="task act"><svg class="lg26"><use href="#logo"/></svg><i></i></span>
<span class="tray"><svg viewBox="0 0 16 16"><path d="M2 11l6-6 6 6" fill="none" stroke="#fff" stroke-width="1.400"/></svg><svg viewBox="0 0 16 16"><rect x="3" y="4" width="8" height="8" rx="1.500" fill="none" stroke="#fff" stroke-width="1.200"/><path d="M11 7l3-2v6l-3-2M4 1.500q3-1.500 6 0M4 14.500q3 1.500 6 0" fill="none" stroke="#fff"/></svg><svg viewBox="0 0 16 16"><path d="M5 3.500h10.500v7H4.500V7M10 11v3M6 14.500h8M.500 2.500h4v4h-4zM2.500 7v7" fill="none" stroke="#fff" stroke-width="1.100"/></svg><svg viewBox="0 0 16 16"><path d="M1 5.500h2l3-3v11l-3-3H1zM8.500 5.500q1.500 2.500 0 5M11 3.500q3 4.500 0 9M13.500 2q4 6 0 12" fill="none" stroke="#fff" stroke-width="1.100"/></svg></span>
<span class="clock">16:33<br>20-06-2023</span>
<span class="notif"><svg viewBox="0 0 18 18"><path d="M1.500 1.500h15v11.500h-4.500l-3 3-3-3H1.500z" fill="none" stroke="#fff" stroke-width="1.300"/></svg></span>
</footer>
</body>
</html>
```
FILE: styles.css
```css
* { box-sizing: border-box; margin: 0; padding: 0; }
body {
  width: 1600px; height: 900px; overflow: hidden; background: #18181a; color: #f4f4f4;
  display: flex; flex-direction: column;
  font-family: "Noto Sans", "Open Sans", sans-serif; font-size: 11.5px; letter-spacing: -0.2px;
}
.defs { position: absolute; width: 0; height: 0; }
svg { flex: none; width: 16px; height: 16px; display: block; }
i, em { font-style: normal; }
svg.dd { width: 10px; height: 6px; }
svg.pin { width: 8px; height: 12px; }

.titlebar { flex: none; height: 19px; background: #fff; color: #000; display: flex; align-items: center; white-space: nowrap; }
.titlebar .app { width: 18px; height: 18px; margin-top: -3px; }
.vsep { width: 1px; height: 13px; background: #999; margin-left: 8px; margin-right: 3px; }
.quick { display: flex; width: 336px; justify-content: space-around; }
.vsep.end { margin: 0 0 0 16px; }
.wtitle { width: 332px; margin-left: 424px; margin-top: -3px; font-size: 12px; letter-spacing: -0.27px; }
.wbtns { margin-left: auto; width: 138px; margin-top: -3px; display: flex; justify-content: space-around; margin-right: 2px; }
.wbtns svg { width: 12px; height: 12px; }

.tabs { flex: none; height: 27px; padding: 4px 0 0 4px; display: flex; white-space: nowrap; line-height: 22px; color: #fff; }
.tabs span { flex: none; text-align: center; }
.file { width: 56px; height: 22px; background: #348ccb; }
.t1 { width: 51px; } .t2 { width: 75px; } .t3 { width: 70px; } .t4 { width: 67px; } .t5 { width: 56px; }
.t6 { width: 47px; } .t7 { width: 48px; } .t8 { width: 56px; } .t9 { width: 70px; }
.tabs .on { width: 101px; background: #232325; color: #348ccb; }
.help { margin: 2px 6px 0 auto; width: 16px; height: 16px; background: #348ccb; text-align: center; font-size: 14px; line-height: 16px; font-weight: 600; }

.ribbon { flex: none; height: 91px; margin: 0 3px 4px; background: #232325; border: 1px solid #58585a; border-top: 0; display: flex; white-space: nowrap; }
.grp { padding-top: 1px; position: relative; display: flex; flex-direction: column; flex: none; }
.grp::after { content: ""; position: absolute; right: 0; top: 8px; width: 1px; height: 75px; background: #58585a; }
.g1 { width: 101px; } .g2 { width: 414px; } .g3 { width: 337px; } .g4 { width: 174px; } .g5 { width: 120px; }
.body { display: flex; height: 71px; }
.g1 .body { padding-left: 5px; } .g2 .body, .g3 .body { padding-left: 10px; } .g4 .body { padding-left: 7px; } .g5 .body { padding-left: 1px; }
.grp h6 { font-size: 11.5px; font-weight: 400; color: #a3a3a3; text-align: center; line-height: 18px; }
.col p { height: 22px; display: flex; align-items: center; gap: 2px; }
.col p svg { margin-top: 1px; }
.col { flex: none; }
.c131 { width: 131px; } .c82 { width: 82px; } .c85 { width: 85px; } .c52 { width: 52px; } .c121 { width: 121px; } .c130 { width: 130px; }
.dis .col { color: #9b9b9b; }
.g4 .col p { padding-left: 3px; letter-spacing: -0.12px; }
.g4 .col .evalb { width: 70px; height: 20px; margin: 3px 0 -1px; padding: 0 0 2px 2px; background: #3a3a3c; border: 1px solid #8a8a8a; letter-spacing: -0.2px; }
.big { display: flex; flex-direction: column; align-items: center; padding-top: 6px; line-height: 13px; text-align: center; flex: none; }
.big > svg { width: 32px; height: 32px; }
.big svg.dd { display: inline-block; width: 7px; height: 5px; vertical-align: 1px; }
.w46 { width: 46px; } .w40 { width: 40px; } .w50 { width: 50px; } .w70 { width: 70px; } .w54 { width: 54px; }

main { flex: none; height: 688px; display: flex; padding-left: 3px; }
.panel { border: 1px solid #58585a; flex: none; display: flex; flex-direction: column; }
.builder { width: 348px; margin-right: 5px; }
.settings { width: 444px; margin-right: 5px; border-color: #1f4f7a; }
.phead { height: 33px; flex: none; display: flex; align-items: center; padding: 3px 4px 0 7px; color: #636365; }
.phead h2 { font-size: 19.5px; font-weight: 400; letter-spacing: -0.2px; color: #e4e4e4; margin-right: auto; line-height: 28px; padding-top: 2px; }
.phead .dd { margin-right: 5px; }
.settings .phead, .settings .phead h2 { color: #348ccb; }
.mtools { height: 22px; display: flex; align-items: center; padding-left: 7px; gap: 7px; flex: none; color: #f4f4f4; margin-top: -2px; }
.mtools .blue { color: #348ccb; } .mtools .gray { color: #7c7c7c; }
.mtools .dd { margin: 0 4px 0 -3px; }
.treebox { margin: 1px 4px 8px 4px; border: 1px solid #58585a; flex: 1; display: grid; grid-template: 1fr 17px / 1fr 17px; min-height: 0; }
.tree { list-style: none; overflow: hidden; }
.tree li { height: 18px; display: flex; align-items: center; white-space: pre; }
.tree li svg, .num { margin-right: 6px; }
.tree em { font-style: italic; margin-left: 3px; }
.l1 { padding-left: 25px; } .l2 { padding-left: 45px; } .l3 { padding-left: 65px; }
.tree i { width: 15px; flex: none; height: 10px; }
.tree .o::before { content: ""; display: block; width: 7px; height: 7px; margin: 1px 0 0 0; background: #f0f0f0; clip-path: polygon(100% 0, 100% 100%, 0 100%); }
.tree .c::before { content: ""; display: block; width: 6px; height: 10px; margin-left: 2px; background: #9a9a9a; clip-path: polygon(0 0, 100% 50%, 0 100%, 0 0, 1px 2px, 1px 8px, 4.5px 5px, 1px 2px); }
.tree .sel { background: #464648; }
.num { width: 16px; font: 8px/7px "DejaVu Sans", sans-serif; letter-spacing: -0.7px; color: #c864b2; flex: none; }
.vsb { display: flex; flex-direction: column; background: #6c6c6c; width: 17px; flex: none; }
.vsb svg, .hsb svg { width: 17px; height: 17px; background: #808080; }
.grow { flex: 1; }
.th { background: #1f1f21; margin: 0 1px; flex: none; }
.h142 { height: 142px; } .h176 { height: 176px; } .h22 { height: 22px; } .h3 { height: 3px; }
.hsb { display: flex; background: #6c6c6c; }
.hth { width: 15px; background: #1f1f21; margin: 1px 0; }
.corner { background: #f0f0f0; }

.settings h3 { font-size: 14px; font-weight: 400; letter-spacing: -0.25px; color: #348ccb; line-height: 20px; height: 20px; margin-top: 2px; padding-left: 6px; flex: none; }
.stools { height: 22px; flex: none; display: flex; align-items: center; padding: 0 0 4px 7px; gap: 7px; font-size: 12px; }
.stools span { width: 21px; margin: -1px 0 0 -3px; }
.sscroll { flex: 1; display: flex; overflow: hidden; }
.scontent { width: 425px; height: 609px; overflow: hidden; flex: none; }
.frow { display: flex; align-items: center; height: 27px; padding-left: 5px; white-space: nowrap; }
.frow.r24 { height: 24px; }
.frow label { flex: none; padding-bottom: 1px; }
.frow.lab { height: 40px; }
.lab label { width: 41px; } .data label { width: 119px; } .coord label { width: 171px; letter-spacing: -0.1px; }
.r24 label { letter-spacing: 0; padding-bottom: 2px; }
.inp { height: 18px; line-height: 15px; border: 1px solid #616163; background: #232325; padding-left: 2px; }
.lab .inp { width: 346px; }
.coord .inp { width: 223px; }
.unit { margin: 0 0 2px 10px; }
.cmb { width: 296px; height: 21px; border: 1px solid #68686a; border-radius: 2px; display: flex; align-items: center; justify-content: space-between; padding: 0 5px 0 12px; }
.cmb.short { width: 268px; }
.coord .cmb { width: 244px; }
.ibtn { width: 20px; height: 22px; margin-left: 8px; border: 1px solid #616163; border-radius: 2px; background: #232325; display: flex; align-items: center; padding-left: 1px; }
.sec { height: 26px; background: #454547; display: flex; align-items: center; padding-left: 5px; font-size: 12.5px; color: #eee; }
.sec svg { width: 10px; height: 6px; margin-right: 11px; }
.sec .dim { color: #606062; }
.sec .rt { transform: rotate(-90deg) translate(1px, -1px); }
.gap { margin-bottom: 2px; }
.data { height: 96px; padding-top: 7px; }
.coord { padding-top: 6px; }
.fs { margin: 14px 0 0 3px; width: 419px; height: 122px; border: 1px solid #58585a; }
.fs.first { margin-top: 11px; }
.lg { margin: -10px 0 6px 5px; width: 107px; height: 16px; background: #18181a; padding-left: 3px; display: flex; align-items: center; gap: 5px; white-space: nowrap; font-size: 11.7px; letter-spacing: -0.25px; }
.lg i { width: 14px; height: 13px; background: #b0b0b0; border: 1px solid #909090; }
.mm { display: flex; height: 18px; padding-left: 8px; color: #737373; line-height: 17px; }
.mm label { width: 68px; }
.mm .inp { width: 333px; background: none; border-color: #3c3c3e; color: #8a8a8a; }
.sl { width: 417px; height: 36px; }
.knob { fill: #868686; stroke: #6b6b6b; }

.right { display: flex; flex-direction: column; gap: 5px; }
.right .panel { width: 792px; }
.graphics { height: 546px; }
.messages { height: 137px; }
.ptabs { height: 29px; flex: none; border-bottom: 1px solid #58585a; display: flex; align-items: flex-end; padding: 0 4px 0 4px; white-space: nowrap; font-size: 12.5px; color: #636365; }
.ptabs span { height: 23px; color: #f0f0f0; display: flex; align-items: center; padding: 1px 4px 0; margin-right: 8px; letter-spacing: -0.25px; flex: none; }
.ptabs .act { border: 1px solid #58585a; border-bottom: 0; height: 24px; margin-bottom: -1px; background: #18181a; padding-top: 1px; }
.ptabs .tab { background: #565658; }
.x { width: 10px; height: 10px; margin: -3px 2px 0 auto; stroke: #e0e4f4; stroke-width: 1.4; }
.ptabs .w62 { width: 61px; } .w141 { width: 141px; } .ptabs .w89 { width: 88px; margin-right: 9px; } .w60 { width: 60px; } .w30 { width: 30px; } .w107 { width: 107px; }
.w141 { letter-spacing: -0.15px; }
.ptabs > .dd { margin: 0 5px 8px auto; }
.ptabs > .pin { margin-bottom: 3px; }
.gtools { height: 30px; flex: none; display: flex; align-items: center; padding-left: 7px; gap: 7px; }
.gtools .dd { margin: 0 4px 0 -3px; }
.gtools i { width: 1px; height: 16px; background: #58585a; margin: 0; }
.gtools i.m { margin: 0 -2px 0 1px; }
.gtools b, .mbar b { width: 20px; height: 20px; border: 1px solid #8a8a8a; border-radius: 2px; background: #333335; display: flex; align-items: center; justify-content: center; margin-right: -4px; flex: none; }
.gtools b + svg { margin-left: 2px; }
.plot { width: 790px; height: 485px; }
.ax { font: 12px "DejaVu Sans", sans-serif; fill: #e2e2e2; letter-spacing: 0; }
.mid { text-anchor: middle; } .end { text-anchor: end; }
.mbar { height: 29px; flex: none; display: flex; align-items: center; padding: 1px 0 0 7px; gap: 5px; }
.mbar b { background: #454547; }
.log { margin: -1px 4px 0; height: 74px; border: 1px solid #58585a; display: flex; overflow: hidden; }
.lines { flex: 1; margin-top: -3px; padding-left: 2px; white-space: nowrap; line-height: 15px; }
.lines p { height: 15px; }

.status { height: 31px; flex: none; padding-left: 921px; line-height: 37px; overflow: hidden; letter-spacing: -0.52px; }

.taskbar { height: 40px; flex: none; display: flex; align-items: center; background: linear-gradient(90deg, #233b44 0%, #20343f 45%, #1b2c45 75%, #1a2948 100%); }
.taskbar span { flex: none; }
.start { width: 48px; padding-left: 16px; }
.search { width: 288px; height: 40px; background: #f2f2f2; border: 1px solid #b8b8b8; color: #222; display: flex; align-items: center; padding-left: 11px; font-size: 14.5px; letter-spacing: -0.25px; }
.mag { width: 18px; height: 18px; margin-right: 10px; }
.bfly { width: 72px; height: 38px; margin-left: auto; margin-right: 2px; }
.tv { width: 48px; padding-left: 15px; margin-right: 3px; }
.tv svg { width: 18px; height: 18px; }
.task { width: 48px; height: 40px; margin-right: 1px; display: flex; flex-direction: column; align-items: center; justify-content: space-between; padding-top: 8px; }
.task svg { width: 24px; height: 24px; }
.task .lg26 { width: 26px; height: 26px; }
.task i { width: 40px; height: 2px; background: #76b9ed; }
.task.act { background: #4d5f67; }
.task.act i { width: 48px; }
.tray { margin-left: auto; display: flex; gap: 8px; padding: 0 4px; }
.clock { width: 68px; text-align: center; line-height: 18px; color: #fff; margin-top: -1px; }
.notif { width: 50px; height: 40px; padding: 12px 0 0 13px; border-right: 1px solid #7d8696; margin-right: 4px; }
.notif svg { width: 18px; height: 18px; }
```
